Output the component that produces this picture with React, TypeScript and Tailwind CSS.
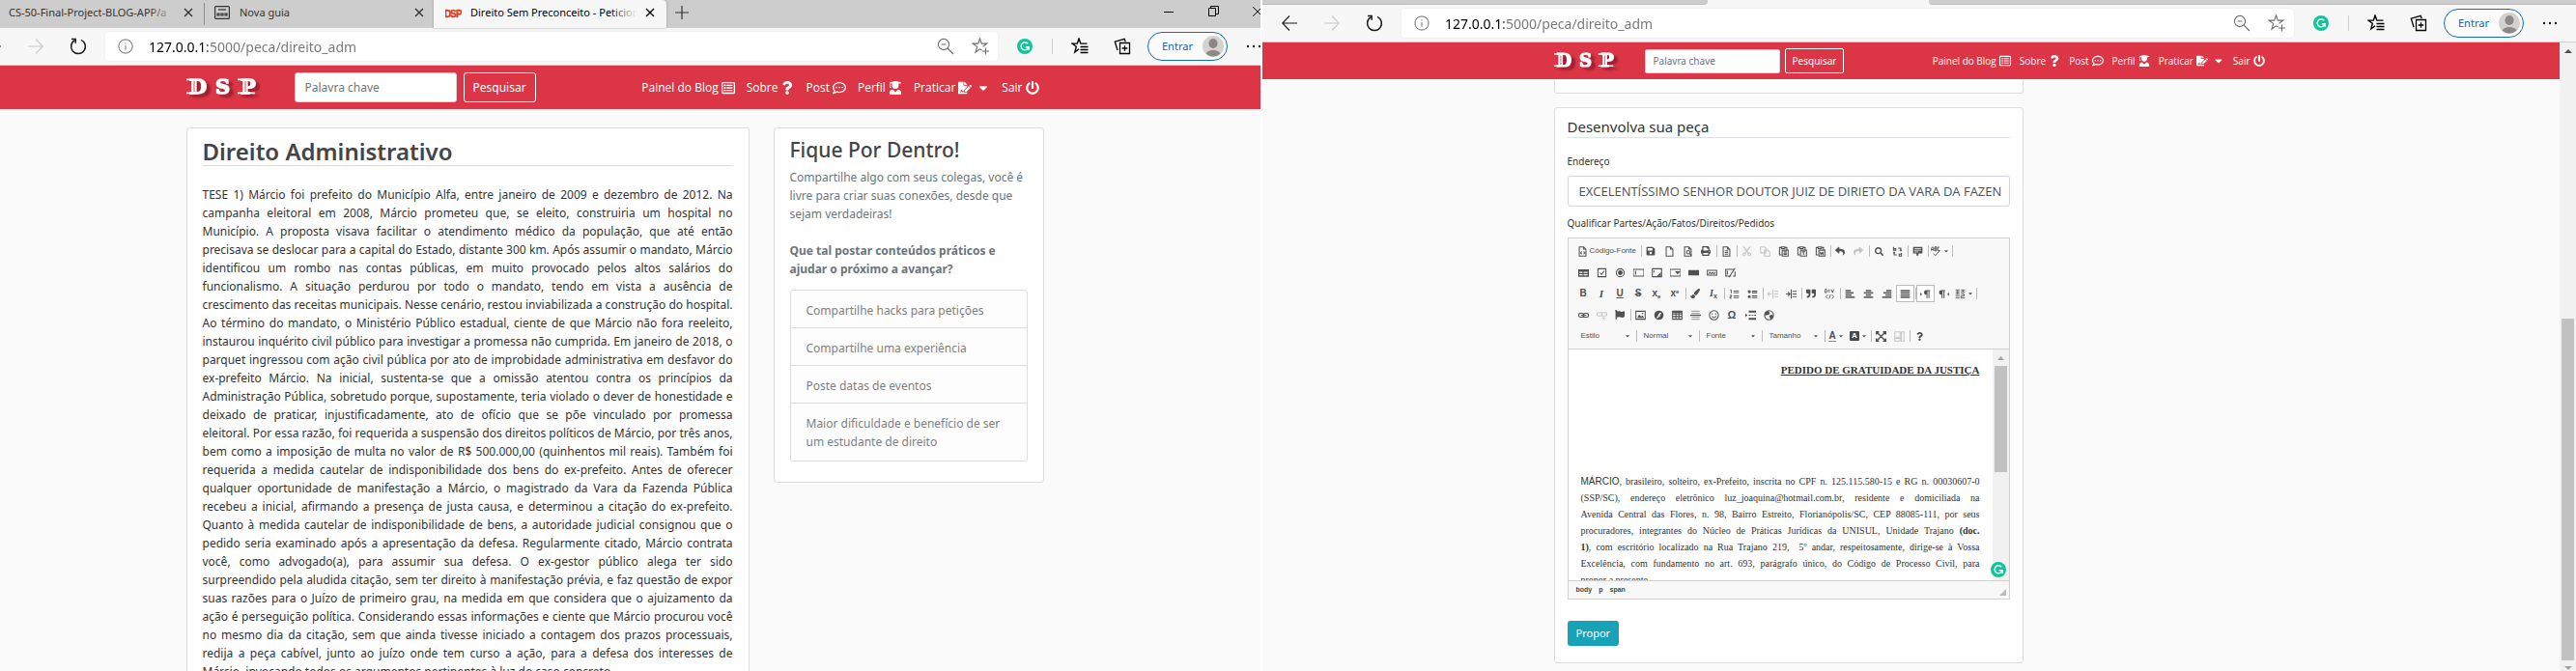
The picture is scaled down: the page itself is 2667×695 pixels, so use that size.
import type { ReactNode } from "react";
import {
  FaCaretDown,
  FaFileSignature,
  FaFlag,
  FaPaintBrush,
  FaPowerOff,
  FaPrint,
  FaQuestion,
  FaQuoteRight,
  FaRegCommentDots,
  FaRegListAlt,
  FaReply,
  FaSave,
  FaSearch,
  FaShare,
  FaUserGraduate,
} from "react-icons/fa";

const SANS = "font-['Noto_Sans','Open_Sans',sans-serif]";

/* ---------- Browser chrome ---------- */

function Stroke({ size = 18, children, className = "" }: { size?: number; children: ReactNode; className?: string }) {
  return (
    <svg
      width={size}
      height={size}
      viewBox="0 0 18 18"
      fill="none"
      stroke="currentColor"
      strokeWidth="1.1"
      className={"shrink-0 " + className}
      aria-hidden="true"
    >
      {children}
    </svg>
  );
}

function ChromeButton({ label, children, className = "w-[44px]" }: { label: string; children: ReactNode; className?: string }) {
  return (
    <button type="button" aria-label={label} className={"flex h-[30px] shrink-0 items-center justify-center " + className}>
      {children}
    </button>
  );
}

function Grammarly({ className }: { className: string }) {
  return (
    <svg viewBox="0 0 20 20" className={className} aria-hidden="true">
      <circle cx="10" cy="10" r="10" fill="#15c39a" />
      <path d="M14 6.6A5 5 0 1 0 15 11M11 11h4.2v3.6" fill="none" stroke="#fff" strokeWidth="1.8" />
    </svg>
  );
}

function AddressBar({ id }: { id: string }) {
  return (
    <div className="flex h-[39px] items-center border-b border-[#cfcfcf] bg-[#f7f7f7] pl-[6px] text-[#1b1b1b]">
      <ChromeButton label="Voltar">
        <Stroke><path d="M17 9H2M9 1.5 1.8 9 9 16.5" /></Stroke>
      </ChromeButton>
      <ChromeButton label="Avançar">
        <Stroke className="text-[#cacaca]"><path d="M1 9h15M9 1.5 16.2 9 9 16.5" /></Stroke>
      </ChromeButton>
      <ChromeButton label="Atualizar">
        <Stroke>
          <path d="M5.6 2.6A7.4 7.4 0 1 0 12 2.4" strokeWidth="1.5" />
          <path d="M2 1.6h4.2v4.2" strokeWidth="1.5" />
        </Stroke>
      </ChromeButton>
      <div className="ml-[6px] flex h-[30px] min-w-0 flex-1 items-center rounded-[4px] bg-white pl-[13px] shadow-[0_0_2px_rgba(0,0,0,0.08)]">
        <Stroke size={16} className="text-[#6b6b6b]">
          <circle cx="9" cy="9" r="8" />
          <path d="M9 8v5M9 5v1.3" />
        </Stroke>
        <label htmlFor={id} className="sr-only">Endereço da página</label>
        <input
          id={id}
          readOnly
          value="127.0.0.1:5000/peca/direito_adm"
          className="ml-[16px] min-w-0 flex-1 bg-[linear-gradient(90deg,#000_61px,#767676_61px)] bg-clip-text font-['Noto_Sans',sans-serif] text-[14px] text-transparent outline-none"
        />
        <ChromeButton label="Reduzir zoom" className="w-[36px] text-[#6b6b6b]">
          <Stroke>
            <circle cx="7" cy="7" r="5.6" />
            <path d="M11 11l6 6M4.6 7h4.8" />
          </Stroke>
        </ChromeButton>
        <ChromeButton label="Adicionar aos favoritos" className="w-[36px] text-[#6b6b6b]">
          <Stroke>
            <path d="M10.5 13 8.5 11.8 4 15l1.7-5.6L1.2 6.1h5.5L8.5 1l1.8 5.1h5.5l-4.2 3.2M14.5 10.500v7M11 14h7" />
          </Stroke>
        </ChromeButton>
      </div>
      <ChromeButton label="Grammarly" className="w-[56px]">
        <Grammarly className="size-[16px]" />
      </ChromeButton>
      <div className="mr-[6px] h-[16px] w-px bg-[#cfcfcf]" />
      <ChromeButton label="Favoritos">
        <Stroke className="text-black">
          <path d="M8 11.700 3.800 15l1.500-5.700L1 6.100h5.300L8 1l1.800 5.100h6.700M9.500 9.500h8M9.500 12.500h8M9.500 15.500h8" strokeWidth="1.400" />
        </Stroke>
      </ChromeButton>
      <ChromeButton label="Coleções">
        <Stroke className="text-black">
          <path d="M6.500 5.500h10v11h-10zM11.500 8.200v5.600M8.700 11h5.600M4 13 1.300 4.200 11.200 1.300l1 3" strokeWidth="1.300" />
        </Stroke>
      </ChromeButton>
      <button
        type="button"
        className="ml-[4px] flex h-[30px] w-[83px] shrink-0 items-center justify-between rounded-full border border-[#0f6cbd] bg-[#fbfbfb] pr-[3px] pl-[14px] text-[11px] text-[#0f62b0]"
      >
        Entrar
        <svg viewBox="0 0 22 22" className="size-[22px]" aria-hidden="true">
          <circle cx="11" cy="11" r="11" fill="#d4d2cf" />
          <ellipse cx="11" cy="8" rx="4.600" ry="5" fill="#8b8885" />
          <path d="M3.500 18.500a8 5.500 0 0 1 15 0A11 11 0 0 1 3.500 18.500z" fill="#8b8885" />
        </svg>
      </button>
      <ChromeButton label="Mais opções" className="w-[54px]">
        <svg width="16" height="4" viewBox="0 0 16 4" fill="currentColor" aria-hidden="true">
          <circle cx="2" cy="2" r="1.200" />
          <circle cx="8" cy="2" r="1.200" />
          <circle cx="14" cy="2" r="1.200" />
        </svg>
      </ChromeButton>
    </div>
  );
}

function Cross() {
  return (
    <svg width="10" height="10" viewBox="0 0 10 10" className="shrink-0" aria-hidden="true">
      <path d="M1 1l8 8M9 1 1 9" stroke="currentColor" strokeWidth="1.400" />
    </svg>
  );
}

function TabTitle({ children, from }: { children: ReactNode; from: string }) {
  return (
    <span className="relative min-w-0 flex-1 overflow-hidden whitespace-nowrap">
      {children}
      <span className={"absolute inset-y-0 right-0 w-[28px] bg-linear-to-l to-transparent " + from} />
    </span>
  );
}

function TabStrip() {
  return (
    <div className="flex h-[29px] items-stretch bg-[#cdcdcd] text-[11px] text-[#333]">
      <div className="my-[3px] flex w-[247px] items-center border-r border-[#8f8f8f] pr-[11px] pb-[3px] pl-[44px]">
        <TabTitle from="from-[#cdcdcd]">CS-50-Final-Project-BLOG-APP/a</TabTitle>
        <button type="button" aria-label="Fechar guia" className="ml-[8px]"><Cross /></button>
      </div>
      <div className="flex w-[237px] items-center pr-[10px] pb-[3px] pl-[10px]">
        <svg width="16" height="14" viewBox="0 0 16 14" fill="none" stroke="#333" strokeWidth="1.200" aria-hidden="true">
          <rect x="0.600" y="0.600" width="14.800" height="12.800" rx="1" />
          <path d="M4 4h8" />
          <path d="M3 8h2v2H3zM7 8h2v2H7zM11 8h2v2h-2z" />
        </svg>
        <span className="ml-[10px] flex-1">Nova guia</span>
        <button type="button" aria-label="Fechar guia"><Cross /></button>
      </div>
      <div className="flex w-[241px] items-center rounded-tr-[4px] bg-[#f7f7f7] pr-[12px] pb-[3px] pl-[12px] text-black shadow-[0_0_2px_rgba(0,0,0,0.4)]">
        <svg width="17" height="16" viewBox="0 0 17 16" aria-hidden="true">
          <g className="fill-[#d9401f] stroke-[#d9401f] font-['Liberation_Sans_Narrow','Liberation_Sans',sans-serif] text-[10px] font-bold" strokeWidth="0.400">
            <text x="-1" y="13">D</text>
            <text x="5" y="13">S</text>
            <text x="11" y="13">P</text>
          </g>
        </svg>
        <span className="ml-[9px] flex min-w-0 flex-1">
          <TabTitle from="from-[#f7f7f7]">Direito Sem Preconceito - Peticionamento</TabTitle>
        </span>
        <button type="button" aria-label="Fechar guia" className="ml-[8px]"><Cross /></button>
      </div>
      <button type="button" aria-label="Nova guia" className="flex w-[32px] items-center justify-center pb-[4px]">
        <svg width="14" height="14" viewBox="0 0 14 14" aria-hidden="true"><path d="M7 0v14M0 7h14" stroke="#333" strokeWidth="1.200" /></svg>
      </button>
      <div className="ml-auto flex pb-[6px] text-black">
        <button type="button" aria-label="Minimizar" className="flex w-[46px] items-center justify-center">
          <svg width="10" height="10" viewBox="0 0 10 10" aria-hidden="true"><path d="M0 5.500h10" stroke="currentColor" /></svg>
        </button>
        <button type="button" aria-label="Restaurar" className="flex w-[46px] items-center justify-center">
          <svg width="11" height="11" viewBox="0 0 11 11" fill="none" stroke="currentColor" aria-hidden="true">
            <path d="M0.500 2.500h7v8h-7zM2.500 2.500v-2h8v8h-3" />
          </svg>
        </button>
        <button type="button" aria-label="Fechar" className="flex w-[46px] items-center justify-center">
          <svg width="10" height="10" viewBox="0 0 10 10" aria-hidden="true"><path d="M0 0l10 10M10 0 0 10" stroke="currentColor" /></svg>
        </button>
      </div>
    </div>
  );
}

/* ---------- Site ---------- */

function Logo({ className }: { className: string }) {
  return (
    <svg
      viewBox="0 0 88 22"
      className={"shrink-0 overflow-visible drop-shadow-[4px_3px_1px_rgba(90,10,25,0.5)] " + className}
      role="img"
      aria-label="DSP"
    >
      <g className="fill-white stroke-white font-['DejaVu_Serif',serif] text-[21px] font-bold" strokeWidth="1.400">
        <text x="3" y="17">D</text>
        <text x="30" y="17">S</text>
        <text x="56" y="17">P</text>
      </g>
      <path d="M0 2.400h12M0 16.400h12M53 2.400h12M53 16.400h18" stroke="#fff" strokeWidth="1.800" />
      <path d="M8 4v11M61 4v11" stroke="#dc3545" strokeWidth="0.900" />
    </svg>
  );
}

const LINKS = [
  { text: "Painel do Blog", Icon: FaRegListAlt },
  { text: "Sobre", Icon: FaQuestion },
  { text: "Post", Icon: FaRegCommentDots },
  { text: "Perfil", Icon: FaUserGraduate },
  { text: "Praticar", Icon: FaFileSignature, caret: true },
  { text: "Sair", Icon: FaPowerOff },
];

function Links({ className, icon }: { className: string; icon: string }) {
  return (
    <nav className={"ml-auto flex items-center font-['Open_Sans','Noto_Sans',sans-serif] whitespace-nowrap " + className}>
      {LINKS.map(({ text, Icon, caret }) => (
        <a key={text} href="#" className="flex items-center gap-[3px]">
          {text}
          <Icon className={icon} />
          {caret && <FaCaretDown className={"ml-[2px] " + icon} />}
        </a>
      ))}
    </nav>
  );
}

const CASE_LINES = [
  "TESE 1) Márcio foi prefeito do Município Alfa, entre janeiro de 2009 e dezembro de 2012. Na",
  "campanha eleitoral em 2008, Márcio prometeu que, se eleito, construiria um hospital no",
  "Município. A proposta visava facilitar o atendimento médico da população, que até então",
  "precisava se deslocar para a capital do Estado, distante 300 km. Após assumir o mandato, Márcio",
  "identificou um rombo nas contas públicas, em muito provocado pelos altos salários do",
  "funcionalismo. A situação perdurou por todo o mandato, tendo em vista a ausência de",
  "crescimento das receitas municipais. Nesse cenário, restou inviabilizada a construção do hospital.",
  "Ao término do mandato, o Ministério Público estadual, ciente de que Márcio não fora reeleito,",
  "instaurou inquérito civil público para investigar a promessa não cumprida. Em janeiro de 2018, o",
  "parquet ingressou com ação civil pública por ato de improbidade administrativa em desfavor do",
  "ex-prefeito Márcio. Na inicial, sustenta-se que a omissão atentou contra os princípios da",
  "Administração Pública, sobretudo porque, supostamente, teria violado o dever de honestidade e",
  "deixado de praticar, injustificadamente, ato de ofício que se põe vinculado por promessa",
  "eleitoral. Por essa razão, foi requerida a suspensão dos direitos políticos de Márcio, por três anos,",
  "bem como a imposição de multa no valor de R$ 500.000,00 (quinhentos mil reais). Também foi",
  "requerida a medida cautelar de indisponibilidade dos bens do ex-prefeito. Antes de oferecer",
  "qualquer oportunidade de manifestação a Márcio, o magistrado da Vara da Fazenda Pública",
  "recebeu a inicial, afirmando a presença de justa causa, e determinou a citação do ex-prefeito.",
  "Quanto à medida cautelar de indisponibilidade de bens, a autoridade judicial consignou que o",
  "pedido seria examinado após a apresentação da defesa. Regularmente citado, Márcio contrata",
  "você, como advogado(a), para assumir sua defesa. O ex-gestor público alega ter sido",
  "surpreendido pela aludida citação, sem ter direito à manifestação prévia, e faz questão de expor",
  "suas razões para o Juízo de primeiro grau, na medida em que considera que o ajuizamento da",
  "ação é perseguição política. Considerando essas informações e ciente que Márcio procurou você",
  "no mesmo dia da citação, sem que ainda tivesse iniciado a contagem dos prazos processuais,",
  "redija a peça cabível, junto ao juízo onde tem curso a ação, para a defesa dos interesses de",
];

const IDEAS = [
  "Compartilhe hacks para petições",
  "Compartilhe uma experiência",
  "Poste datas de eventos",
  "Maior dificuldade e benefício de ser um estudante de direito",
];

function CasePage() {
  return (
    <section className="overflow-hidden bg-[#fafafa]">
      <div className="-ml-[35px] w-[calc(100%+55px)]">
        <TabStrip />
        <AddressBar id="url-case" />
        <header className="h-[45px] bg-[#dc3545] pr-[17px]">
          <div className="mx-auto flex h-full max-w-[888px] items-center text-[12px] text-white">
            <Logo className="w-[88px]" />
            <label htmlFor="search-case" className="sr-only">Palavra chave</label>
            <input
              id="search-case"
              placeholder="Palavra chave"
              className="ml-[24px] h-[31px] w-[168px] rounded-[3px] border border-[#ced4da] bg-white px-[10px] text-[#495057] placeholder:text-[#6c757d]"
            />
            <button type="button" className="ml-[7px] h-[31px] rounded-[3px] border border-white px-[9px]">Pesquisar</button>
            <Links className="mr-[5px] gap-[12px]" icon="size-[14px]" />
          </div>
        </header>
        <main className="pt-[19px] pr-[17px]">
          <div className="mx-auto flex max-w-[888px] items-start gap-[25px]">
            <article className="min-w-0 flex-1 rounded-[3px] border border-[#dddddd] bg-white px-[16px] pt-[9px] pb-[16px]">
              <h1 className="border-b border-[#dddddd] text-[24px] leading-[29px] font-semibold text-[#444]">Direito Administrativo</h1>
              <p className="mt-[20px] text-[12px] leading-[19px] text-[#333]">
                {CASE_LINES.map((line) => (
                  <span key={line} className="block [text-align-last:justify]">{line}</span>
                ))}
                <span className="block">Márcio, invocando todos os argumentos pertinentes à luz do caso concreto.</span>
              </p>
            </article>
            <aside className="w-[280px] shrink-0 rounded-[3px] border border-[#dddddd] bg-white px-[16px] pt-[8px] pb-[21px] text-[12px] leading-[19px] text-[#6c757d]">
              <h2 className="text-[21px] leading-[28px] font-medium text-[#444]">Fique Por Dentro!</h2>
              <p className="mt-[5px] whitespace-nowrap">
                Compartilhe algo com seus colegas, você é<br />
                livre para criar suas conexões, desde que<br />
                sejam verdadeiras!
              </p>
              <p className="mt-[19px] font-bold">
                Que tal postar conteúdos práticos e<br />
                ajudar o próximo a avançar?
              </p>
              <ul className="mt-[12px] divide-y divide-[#dddddd] rounded-[3px] border border-[#dddddd] bg-[#fdfdfd] text-[#7f7f7f]">
                {IDEAS.map((idea) => (
                  <li key={idea} className="px-[16px] pt-[11px] pb-[8px] last:pb-[10px]">{idea}</li>
                ))}
              </ul>
            </aside>
          </div>
        </main>
      </div>
    </section>
  );
}

/* ---------- Rich text editor ---------- */

function Glyph({ children, solid = false }: { children: ReactNode; solid?: boolean }) {
  return (
    <svg
      width="11"
      height="11"
      viewBox="0 0 16 16"
      fill={solid ? "currentColor" : "none"}
      stroke={solid ? "none" : "currentColor"}
      strokeWidth="1.500"
      aria-hidden="true"
    >
      {children}
    </svg>
  );
}

const PAGE = "M3 1h6.500L13 4.500V15H3zM9.500 1v3.500H13";
const CLIP = "M5 2H2v11h3M10 2h3v3M5 1h5v2.500H5zM6 6h9v9H6z";

type Tool = { label: string; icon: ReactNode; off?: boolean; on?: boolean; caret?: boolean };

const ROW_1: Tool[][] = [
  [
    { label: "Salvar", icon: <FaSave className="size-[10px]" /> },
    { label: "Novo", icon: <Glyph><path d={PAGE} /></Glyph> },
    { label: "Visualizar", icon: <Glyph><path d={PAGE} /><circle cx="8.500" cy="9" r="2.500" /><path d="M10.500 11l3 3" /></Glyph> },
    { label: "Imprimir", icon: <FaPrint className="size-[10px]" /> },
  ],
  [{ label: "Modelos", icon: <Glyph><path d={PAGE} /><path d="M5.500 7h5M5.500 9.500h5M5.500 12h5" /></Glyph> }],
  [
    { label: "Recortar", off: true, icon: <Glyph><path d="M3 1l8 10M13 1 5 11" strokeWidth="2" /><circle cx="4" cy="12.500" r="2" /><circle cx="12" cy="12.500" r="2" /></Glyph> },
    { label: "Copiar", off: true, icon: <Glyph><path d="M1 1h6l2 2v7H1zM7 6h5l3 3v6H7z" /></Glyph> },
    { label: "Colar", icon: <Glyph><path d={CLIP} /><path d="M8 8.500h5M8 10.500h5M8 12.500h5" /></Glyph> },
    { label: "Colar como texto", icon: <Glyph><path d={CLIP} /><path d="M8 8.500h5M10.500 8.500V13" /></Glyph> },
    { label: "Colar do Word", icon: <Glyph><path d={CLIP} /><path d="M8 8.500l1 4 1.500-3 1.500 3 1-4" /></Glyph> },
  ],
  [
    { label: "Desfazer", icon: <FaReply className="size-[10px]" /> },
    { label: "Refazer", off: true, icon: <FaShare className="size-[10px]" /> },
  ],
  [
    { label: "Localizar", icon: <FaSearch className="size-[9px]" /> },
    { label: "Substituir", icon: <Glyph><path d="M2 1v5h3.500V3.500H2M14 10v5h-3.500v-3H14M9 3h4v4M7 13H3V9M1.500 10.500 3 9l1.500 1.500M11.500 5.500 13 7l1.500-1.500" /></Glyph> },
  ],
  [{ label: "Selecionar tudo", icon: <Glyph solid><path d="M1 1h14v10H9v3H6v-3H1zM3 3v1h10V3zM3 5.500v1h10v-1zM3 8v1h6V8z" fillRule="evenodd" /></Glyph> }],
  [{ label: "Verificar ortografia", caret: true, icon: <Glyph><path d="M1 7V3l1.500-2L4 3v4M1 5h3M6 1v6h2.500V1zM6 4h2.500M13 1.500h-2.500v5H13M4 11l3 3 7-8" strokeWidth="1.400" /></Glyph> }],
];

const ROW_2: Tool[][] = [
  [
    { label: "Formulário", icon: <Glyph solid><path d="M0 3h16v11H0zM1.500 6.500v2h5v-2zM8 6.500v2h6v-2zM1.500 10v2h5v-2zM8 10v2h6v-2z" fillRule="evenodd" /></Glyph> },
    { label: "Caixa de seleção", icon: <Glyph><path d="M2 2h12v12H2zM5 8l2.500 2.500L11.500 5" /></Glyph> },
    { label: "Botão de opção", icon: <Glyph><circle cx="8" cy="8" r="6" /><circle cx="8" cy="8" r="2.800" fill="currentColor" /></Glyph> },
    { label: "Caixa de texto", icon: <Glyph><path d="M0 3h16v10H0zM3.500 5v6" /></Glyph> },
    { label: "Área de texto", icon: <Glyph><path d="M1 2h14v12H1zM3.500 4.500v3M13 9l-4 4h4z" /></Glyph> },
    { label: "Caixa de listagem", icon: <Glyph><path d="M0 3h16v10H0z" /><path d="M9 6.500h5l-2.500 3z" fill="currentColor" /></Glyph> },
    { label: "Botão", icon: <Glyph solid><path d="M0 4h16v8H0z" /></Glyph> },
    { label: "Botão imagem", icon: <Glyph><path d="M1 4.500h14v7H1zM3 9.500l2-2 2 2 2-2 2 2 2-2" /></Glyph> },
    { label: "Campo oculto", icon: <Glyph><path d="M9 13H1V3h12M3.500 5v6M15 1 6 15M15 6v7h-3" /></Glyph> },
  ],
];

const letter = "font-['Liberation_Sans',sans-serif] text-[10px] leading-none font-bold";

function lines(rows: [number, number][]) {
  return (
    <Glyph>
      {rows.map(([x, w], i) => (
        <path key={i} d={`M${x} ${3 + i * 3.300}h${w}`} strokeWidth="2.200" />
      ))}
    </Glyph>
  );
}

const ROW_3: Tool[][] = [
  [
    { label: "Negrito", icon: <b className={letter}>B</b> },
    { label: "Itálico", icon: <i className="font-['Liberation_Serif',serif] text-[11px] leading-none font-bold">I</i> },
    { label: "Sublinhado", icon: <u className={letter}>U</u> },
    { label: "Tachado", icon: <s className={letter}>S</s> },
    { label: "Subscrito", icon: <span className={letter}>x<sub className="text-[6px]">e</sub></span> },
    { label: "Sobrescrito", icon: <span className={letter}>x<sup className="text-[6px]">e</sup></span> },
  ],
  [
    { label: "Copiar formatação", icon: <FaPaintBrush className="size-[10px]" /> },
    { label: "Remover formatação", icon: <span className={letter}><i className="font-['Liberation_Serif',serif]">I</i><sub className="text-[7px]">x</sub></span> },
  ],
  [
    { label: "Lista numerada", icon: <Glyph><path d="M7 3.500h8M7 6h8M7 11h8M7 13.500h8M2 2h1.500v5M1.500 10h2.500v2H1.500v2.500H4" strokeWidth="1.300" /></Glyph> },
    { label: "Lista sem números", icon: <Glyph><path d="M7 3.500h8M7 6h8M7 11h8M7 13.500h8" /><circle cx="3" cy="4.500" r="1.500" fill="currentColor" /><circle cx="3" cy="12" r="1.500" fill="currentColor" /></Glyph> },
  ],
  [
    { label: "Diminuir recuo", off: true, icon: <Glyph><path d="M8 1v14M10 4h6M10 8h6M10 12h6M0 8h6M3 5 0 8l3 3" /></Glyph> },
    { label: "Aumentar recuo", icon: <Glyph><path d="M8 1v14M10 4h6M10 8h6M10 12h6M0 8h6M3 5l3 3-3 3" /></Glyph> },
  ],
  [
    { label: "Citação", icon: <FaQuoteRight className="size-[10px]" /> },
    { label: "Criar DIV", icon: <Glyph><path d="M1 1v5h2l1-1V2L3 1zM7 1v5M10 1l2 5 2-5M5 9l-3 3 3 3M11 9l3 3-3 3M9 9l-2 6" strokeWidth="1.300" /></Glyph> },
  ],
  [
    { label: "Alinhar à esquerda", icon: lines([[1, 8], [1, 12], [1, 9], [1, 14]]) },
    { label: "Centralizar", icon: lines([[4, 8], [1, 14], [4, 8], [1, 14]]) },
    { label: "Alinhar à direita", icon: lines([[7, 8], [3, 12], [6, 9], [1, 14]]) },
    { label: "Justificado", on: true, icon: lines([[1, 14], [1, 14], [1, 14], [1, 14]]) },
  ],
  [
    { label: "Esquerda para direita", on: true, icon: <Glyph solid><path d="M0 6l3 2.500L0 11zM9 2h6v1.500h-1V14h-1.500V3.500H11V14H9.500V9A3.500 3.500 0 0 1 9 2z" /></Glyph> },
    { label: "Direita para esquerda", icon: <Glyph solid><path d="M16 6l-3 2.500 3 2.500zM4 2h6v1.500H9V14H7.500V3.500H6V14H4.500V9A3.500 3.500 0 0 1 4 2z" /></Glyph> },
    { label: "Idioma", caret: true, icon: <Glyph><path d="M1 2h6M1 5h6M4 2v6M1 8h6M9 2h6M9 5h6M12 2v3M1 11h6M1 14h6M9 8h5v3H9v3h6" strokeWidth="1.300" /></Glyph> },
  ],
];

const ROW_4: Tool[][] = [
  [
    { label: "Inserir link", icon: <Glyph><rect x="0.500" y="5" width="8" height="6" rx="3" /><rect x="7.500" y="5" width="8" height="6" rx="3" /><path d="M4 8h8" /></Glyph> },
    { label: "Remover link", off: true, icon: <Glyph><rect x="0.500" y="4" width="8" height="5" rx="2.500" /><rect x="7.500" y="4" width="8" height="5" rx="2.500" /><path d="M9 11l4 4M13 11l-4 4" /></Glyph> },
    { label: "Âncora", icon: <FaFlag className="size-[10px]" /> },
  ],
  [
    { label: "Imagem", icon: <Glyph><path d="M1 2h14v12H1z" /><path d="M3 12l3-5 3 3 2-1.500 2.500 3.500z" fill="currentColor" stroke="none" /><circle cx="11" cy="5.500" r="1.200" fill="currentColor" stroke="none" /></Glyph> },
    { label: "Flash", icon: <Glyph solid><path d="M8 1a7 7 0 1 0 0 14A7 7 0 0 0 8 1zM11.500 4v2C9.500 6 9.500 7 9 8h1.500v1.500h-2C8 11.500 6.500 12.500 4.500 12.500v-2c2 0 2-1.500 2.500-3S8.500 4 11.500 4z" fillRule="evenodd" /></Glyph> },
    { label: "Tabela", icon: <Glyph><path d="M1 2h14v12H1zM1 6h14M1 10h14M6 3v11M10.500 3v11" /><path d="M1 3h14" strokeWidth="2.500" /></Glyph> },
    { label: "Linha horizontal", icon: <Glyph><path d="M2 2h12M2 5h12M2 11h12M2 14h12" opacity="0.500" /><path d="M0 8h16" strokeWidth="2" /></Glyph> },
    { label: "Emoticon", icon: <Glyph><circle cx="8" cy="8" r="6.800" /><path d="M5 9.500q3 4 6 0M5.500 5v2M10.500 5v2" /></Glyph> },
    { label: "Caractere especial", icon: <span className="font-['Liberation_Sans',sans-serif] text-[11px] leading-none font-bold">Ω</span> },
    { label: "Quebra de página", icon: <Glyph><path d="M5 2.500h11M5 13.500h11" strokeWidth="3" /><path d="M5 8h3M9.500 8h2.500M13.500 8H16" /><path d="M0 5l3 3-3 3z" fill="currentColor" stroke="none" /></Glyph> },
    { label: "IFrame", icon: <Glyph><circle cx="8" cy="8" r="6.800" /><path d="M3 4l4-1.500 1.500 3L6 7l-3.500.500zM9 9l4-1 .5 3-2.500 2.500z" fill="currentColor" /></Glyph> },
  ],
];

const ROW_5: Tool[][] = [
  [
    { label: "Cor do texto", caret: true, icon: <span className={letter + " border-b border-[#888]"}>A</span> },
    { label: "Cor do fundo", caret: true, icon: <span className="rounded-[1px] bg-[#484848] px-[2px] text-[8px] leading-[10px] font-bold text-white">A</span> },
  ],
  [
    { label: "Maximizar", icon: <Glyph><path d="M1 5V1h4M11 1h4v4M15 11v4h-4M5 15H1v-4M1.500 1.500l13 13M14.500 1.500l-13 13" strokeWidth="2" /></Glyph> },
    { label: "Mostrar blocos", off: true, icon: <Glyph><path d="M1 1h8v8H1zM1 11h8v4H1zM11 1h4v14h-4z" /></Glyph> },
  ],
];

function ToolButton({ label, icon, off, on, caret }: Tool) {
  return (
    <button
      type="button"
      aria-label={label}
      disabled={off}
      className={
        "flex h-[18px] items-center justify-center gap-[2px] " +
        (caret ? "w-[23px] " : "w-[19px] ") +
        (on ? "border border-[#bcbcbc] bg-white " : "") +
        (off ? "opacity-30" : "")
      }
    >
      {icon}
      {caret && <FaCaretDown className="size-[6px]" />}
    </button>
  );
}

function Divider() {
  return <span className="ml-px h-[12px] w-px bg-[#bcbcbc]" />;
}

function Groups({ groups, closed = false }: { groups: Tool[][]; closed?: boolean }) {
  return (
    <>
      {groups.map((group, index) => (
        <div key={index} className="flex items-center">
          {group.map((tool) => (
            <ToolButton key={tool.label} {...tool} />
          ))}
          {(closed || index < groups.length - 1) && <Divider />}
        </div>
      ))}
    </>
  );
}

const row = "flex h-[22px] items-center";

function Editor() {
  return (
    <div className="mt-[7px] border border-[#d1d1d1]">
      <div className="border-b border-[#d1d1d1] bg-[#f8f8f8] py-[2px] pl-[6px] font-['Liberation_Sans',sans-serif] text-[8px] text-[#505050]">
        <div className={row}>
          <button type="button" className="flex h-[18px] w-[68px] items-center gap-[2px] pl-[3px] whitespace-nowrap">
            <Glyph><path d={PAGE} /><path d="M7 8l-2 2 2 2M9.500 8l2 2-2 2" /></Glyph>
            Código-Fonte
          </button>
          <Divider />
          <Groups groups={ROW_1} closed />
        </div>
        <div className={row}><Groups groups={ROW_2} /></div>
        <div className={row}><Groups groups={ROW_3} closed /></div>
        <div className={row}><Groups groups={ROW_4} /></div>
        <div className={row}>
          {["Estilo", "Normal", "Fonte", "Tamanho"].map((name) => (
            <div key={name} className="flex items-center">
              <button type="button" className="flex h-[18px] w-[63px] items-center justify-between pr-[5px] pl-[7px]">
                {name}
                <FaCaretDown className="size-[6px]" />
              </button>
              <Divider />
            </div>
          ))}
          <Groups groups={ROW_5} closed />
          <ToolButton label="Sobre" icon={<FaQuestion className="size-[9px]" />} />
        </div>
      </div>
      <div className="relative flex h-[239px] bg-white">
        <div
          role="textbox"
          aria-label="Texto da peça"
          className="min-w-0 flex-1 overflow-hidden px-[13px] pt-[13px] font-['Liberation_Serif',serif] text-[11px] leading-[17px] text-[#333]"
        >
          <p className="text-right font-bold whitespace-nowrap underline">PEDIDO DE GRATUIDADE DA JUSTIÇA</p>
          <p className="mt-[98px] text-[10px] leading-[17px]">
            <span className="block [text-align-last:justify]">
              <span className="font-['Liberation_Sans',sans-serif]">MÁRCIO</span>, brasileiro, solteiro, ex-Prefeito, inscrita no CPF n. 125.115.580-15 e RG n. 00030607-0
            </span>
            <span className="block [text-align-last:justify]">(SSP/SC), endereço eletrônico luz_joaquina@hotmail.com.br, residente e domiciliada na</span>
            <span className="block [text-align-last:justify]">Avenida Central das Flores, n. 98, Bairro Estreito, Florianópolis/SC, CEP 88085-111, por seus</span>
            <span className="block [text-align-last:justify]">procuradores, integrantes do Núcleo de Práticas Jurídicas da UNISUL, Unidade Trajano <b>(doc.</b></span>
            <span className="block [text-align-last:justify]"><b>1)</b>, com escritório localizado na Rua Trajano 219,&nbsp; 5º andar, respeitosamente, dirige-se à Vossa</span>
            <span className="block [text-align-last:justify]">Excelência, com fundamento no art. 693, parágrafo único, do Código de Processo Civil, para</span>
            <span className="block">propor a presente</span>
          </p>
        </div>
        <div className="flex w-[17px] flex-col items-center bg-[#f1f1f1]">
          <span className="flex h-[17px] items-center">
            <svg width="7" height="4" viewBox="0 0 7 4" aria-hidden="true"><path d="M0 4 3.500 0 7 4z" fill="#a3a3a3" /></svg>
          </span>
          <span className="h-[110px] w-[13px] bg-[#c1c1c1]" />
        </div>
        <Grammarly className="absolute right-[3px] bottom-[3px] size-[16px]" />
      </div>
      <div className="flex h-[19px] items-center gap-[7px] border-t border-[#d1d1d1] bg-[#f8f8f8] pr-[3px] pl-[8px] font-['Liberation_Sans',sans-serif] text-[7px] font-bold text-[#484848]">
        <span>body</span>
        <span>p</span>
        <span>span</span>
        <svg width="7" height="7" viewBox="0 0 7 7" className="mt-[5px] ml-auto" aria-hidden="true"><path d="M7 0v7H0z" fill="#bcbcbc" /></svg>
      </div>
    </div>
  );
}

function DraftPage() {
  return (
    <section className="flex min-w-0 flex-col overflow-hidden bg-[#fafafa]">
      <div className="flex h-[5px] shrink-0 bg-[#f7f7f7]">
        <div className="w-[461px] rounded-br-[4px] border-b border-[#bdbdbd] bg-[#cdcdcd]" />
        <div className="w-[229px]" />
        <div className="flex-1 rounded-bl-[4px] border-b border-[#bdbdbd] bg-[#cdcdcd]" />
      </div>
      <AddressBar id="url-draft" />
      <div className="flex min-h-0 flex-1">
        <div className="min-w-0 flex-1">
          <header className="h-[38px] bg-[#dc3545]">
            <div className="mx-auto flex h-full max-w-[740px] items-center text-[10px] text-white">
              <Logo className="w-[76px]" />
              <label htmlFor="search-draft" className="sr-only">Palavra chave</label>
              <input
                id="search-draft"
                placeholder="Palavra chave"
                className="ml-[18px] h-[25px] w-[140px] rounded-[2px] border border-[#ced4da] bg-white px-[8px] text-[#495057] placeholder:text-[#6c757d]"
              />
              <button type="button" className="ml-[5px] h-[26px] rounded-[2px] border border-white px-[7px]">Pesquisar</button>
              <Links className="mr-[4px] gap-[9px]" icon="size-[12px]" />
            </div>
          </header>
          <main className="mx-auto max-w-[740px]">
            <div className="h-[15px] w-[486px] rounded-b-[3px] border border-t-0 border-[#dddddd] bg-white" />
            <form className="mt-[14px] w-[486px] rounded-[3px] border border-[#dddddd] bg-white px-[13px] pt-[8px] pb-[17px] text-[10px] text-[#333]">
              <h2 className="border-b border-[#dee2e6] text-[15px] leading-[22px]">Desenvolva sua peça</h2>
              <label htmlFor="address" className="mt-[16px] block leading-[16px]">Endereço</label>
              <input
                id="address"
                readOnly
                value="EXCELENTÍSSIMO SENHOR DOUTOR JUIZ DE DIRIETO DA VARA DA FAZEN"
                className="mt-[7px] block h-[32px] w-full rounded-[3px] border border-[#ced4da] pr-[4px] pl-[11px] font-['Open_Sans','Noto_Sans',sans-serif] text-[13px] text-[#495057]"
              />
              <p className="mt-[9px] leading-[16px]">Qualificar Partes/Ação/Fatos/Direitos/Pedidos</p>
              <Editor />
              <button type="button" className="mt-[22px] block h-[26px] rounded-[3px] bg-[#17a2b8] px-[9px] text-[11px] text-white">Propor</button>
            </form>
          </main>
        </div>
        <div className="flex w-[17px] shrink-0 flex-col items-center bg-[#f1f1f1]">
          <span className="flex h-[17px] shrink-0 items-center">
            <svg width="8" height="4" viewBox="0 0 8 4" aria-hidden="true"><path d="M0 4 4 0l4 4z" fill="#505050" /></svg>
          </span>
          <span className="flex-[269]" />
          <span className="w-[13px] flex-[354] bg-[#c1c1c1]" />
          <span className="flex h-[11px] shrink-0 items-center pt-[5px]">
            <svg width="8" height="4" viewBox="0 0 8 4" aria-hidden="true"><path d="M0 0l4 4 4-4z" fill="#a3a3a3" /></svg>
          </span>
        </div>
      </div>
    </section>
  );
}

export default function App() {
  return (
    <div className={"grid h-screen grid-cols-[1305fr_1360fr] gap-[2px] overflow-hidden bg-white " + SANS}>
      <CasePage />
      <DraftPage />
    </div>
  );
}
